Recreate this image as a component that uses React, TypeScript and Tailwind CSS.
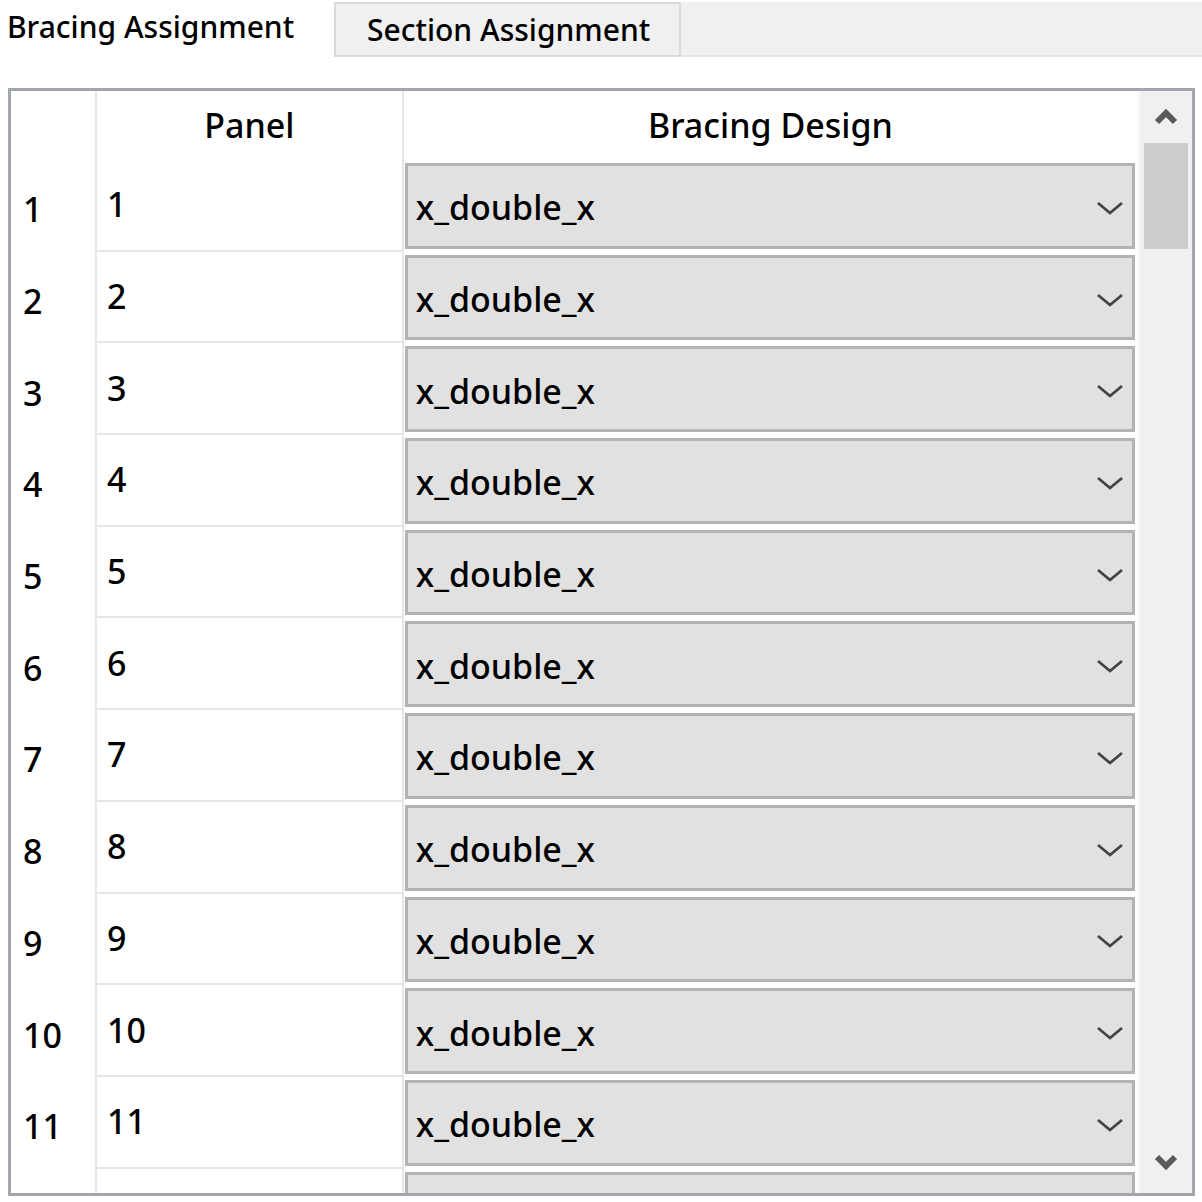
import React from "react";

const ROWS = [1, 2, 3, 4, 5, 6, 7, 8, 9, 10, 11];

function ComboChevron() {
  return (
    <svg width="28" height="16" viewBox="0 0 28 16" className="shrink-0">
      <polyline points="2,3 14,13 26,3" fill="none" stroke="#444444" strokeWidth="2.8" />
    </svg>
  );
}

function ScrollArrow({ up }: { up?: boolean }) {
  return (
    <svg width="24" height="18" viewBox="0 0 24 18">
      <polyline
        points={up ? "3,14 12,5 21,14" : "3,4 12,13 21,4"}
        fill="none"
        stroke="#5a5a5a"
        strokeWidth="6"
      />
    </svg>
  );
}

function DataRow({ n, partial }: { n?: number; partial?: boolean }) {
  return (
    <div className={`flex shrink-0 ${partial ? "h-[40px]" : "h-[91.7px]"}`}>
      <div className="flex w-[86px] items-center pl-[12px] pt-[8px] border-r-2 border-[#e6e6e6]">{n}</div>
      <div className="flex w-[307px] items-center pl-[10px] border-r-2 border-[#e6e6e6] border-b-2 border-b-[#e6e6e6]">
        {n}
      </div>
      <div className="w-[734px] pl-[1px] pr-[2px] pt-[3px] pb-[3px]">
        <div className="flex h-full items-center justify-between border-[3px] border-[#b3b3b3] bg-[#e1e1e1] pl-[8px] pr-[8px] pt-[4px]">
          {partial ? null : <span>x_double_x</span>}
          {partial ? null : <ComboChevron />}
        </div>
      </div>
    </div>
  );
}

export default function App() {
  return (
    <div
      className="relative h-[1202px] w-[1202px] overflow-hidden bg-white text-[34px] font-medium text-black"
      style={{ fontFamily: '"Noto Sans", "Open Sans", sans-serif' }}
    >
      <div className="flex h-[57px] text-[30px]">
        <div className="flex w-[334px] items-center pl-[7px] pb-[4px]">Bracing Assignment</div>
        <div className="mt-[2px] flex w-[347px] items-center border-2 border-[#dadada] bg-[#f0f0f0] pl-[31px]">
          Section Assignment
        </div>
        <div className="mt-[2px] flex-1 border-b-2 border-[#e4e4e4] bg-[#f0f0f0]" />
      </div>

      <div className="ml-[8px] mt-[31px] flex h-[1108px] w-[1187px] overflow-hidden border-[3px] border-[#a2a5aa]">
        <div className="flex w-[1129px] flex-col overflow-hidden">
          <div className="flex h-[69px] shrink-0">
            <div className="w-[86px] border-r-2 border-[#e6e6e6]" />
            <div className="flex w-[307px] items-center justify-center border-r-2 border-[#e6e6e6]">Panel</div>
            <div className="flex w-[734px] items-center justify-center">Bracing Design</div>
          </div>
          {ROWS.map((n) => (
            <DataRow key={n} n={n} />
          ))}
          <DataRow partial />
        </div>
        <div className="w-[3px] bg-[#fafafa]" />
        <div className="flex w-[52px] flex-col bg-[#f0f0f0]">
          <div className="flex h-[52px] items-center justify-center">
            <ScrollArrow up />
          </div>
          <div className="mx-[4px] h-[106px] bg-[#cdcdcd]" />
          <div className="flex-1" />
          <div className="flex h-[52px] items-center justify-center pb-[10px]">
            <ScrollArrow />
          </div>
        </div>
      </div>
    </div>
  );
}
